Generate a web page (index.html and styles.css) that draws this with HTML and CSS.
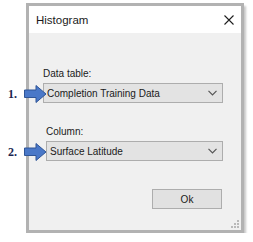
FILE: index.html
```html
<!DOCTYPE html>
<html lang="en">
<head>
    <meta charset="UTF-8">
    <title>Histogram</title>
    <link rel="stylesheet" href="styles.css">
</head>
<body>

    <div class="dialog">
        <div class="titlebar">
            <span class="title">Histogram</span>
            <svg class="close" width="10" height="10" viewBox="0 0 10 10">
                <path d="M0.5 0.5 L9.5 9.5 M9.5 0.5 L0.5 9.5" stroke="#1e1e1e" stroke-width="1.1" fill="none"/>
            </svg>
        </div>

        <div class="content">
            <label class="field-label">Data table:</label>
            <div class="dropdown">
                <span>Completion Training Data</span>
                <svg width="9" height="6" viewBox="0 0 9 6"><path d="M0.5 0.8 L4.5 4.8 L8.5 0.8" stroke="#555" stroke-width="1.2" fill="none"/></svg>
            </div>

            <label class="field-label indent">Column:</label>
            <div class="dropdown indent">
                <span>Surface Latitude</span>
                <svg width="9" height="6" viewBox="0 0 9 6"><path d="M0.5 0.8 L4.5 4.8 L8.5 0.8" stroke="#555" stroke-width="1.2" fill="none"/></svg>
            </div>

            <div class="actions">
                <button class="btn">Ok</button>
            </div>
        </div>

        <!-- size grip -->
        <svg class="grip" width="8" height="8" viewBox="0 0 8 8">
            <rect x="6" y="0" width="2" height="2"/>
            <rect x="3" y="3" width="2" height="2"/>
            <rect x="6" y="3" width="2" height="2"/>
            <rect x="0" y="6" width="2" height="2"/>
            <rect x="3" y="6" width="2" height="2"/>
            <rect x="6" y="6" width="2" height="2"/>
        </svg>
    </div>

    <!-- callout arrows -->
    <div class="marker marker-1">
        <span class="num">1.</span>
        <svg width="23" height="18" viewBox="0 0 23 18"><path d="M0.5 5 H12 V0.5 L22 9 L12 17.5 V12.5 H0.5 Z" fill="#4a78c8" stroke="#2f5597" stroke-width="1"/></svg>
    </div>
    <div class="marker marker-2">
        <span class="num">2.</span>
        <svg width="23" height="18" viewBox="0 0 23 18"><path d="M0.5 5 H12 V0.5 L22 9 L12 17.5 V12.5 H0.5 Z" fill="#4a78c8" stroke="#2f5597" stroke-width="1"/></svg>
    </div>

</body>
</html>
```

FILE: styles.css
```css
body {
    margin: 0;
    background-color: #fff;
    font-family: "Liberation Sans", Arial, sans-serif;
    color: #1a1a1a;
}
.dialog {
    position: relative;
    margin: 3px 0 0 26px;
    width: 212px;
    border: 3px solid #b2b2b2;
    background-color: #f0f0f0;
    box-shadow: 2px 3px 2px rgba(0, 0, 0, 0.22);
}
.titlebar {
    height: 27px;
    padding: 0 7px;
    background-color: #fff;
    display: flex;
    align-items: center;
    justify-content: space-between;
}
.title {
    font-size: 11.5px;
}
.content {
    display: flex;
    flex-direction: column;
    padding: 35px 18px 21px 14px;
}
.field-label {
    font-size: 10px;
    line-height: 12px;
}
.dropdown {
    margin-top: 3px;
    height: 20px;
    box-sizing: border-box;
    border: 1px solid #adadad;
    background-color: #e3e3e3;
    padding: 0 5px 0 3px;
    display: flex;
    align-items: center;
    justify-content: space-between;
    font-size: 10px;
}
.dropdown + .field-label {
    margin-top: 23px;
}
.indent {
    margin-left: 3px;
}
.actions {
    margin-top: 28px;
    display: flex;
    justify-content: flex-end;
    padding-right: 1px;
}
.btn {
    width: 70px;
    height: 20px;
    border: 1px solid #adadad;
    background-color: #e1e1e1;
    font-family: "Liberation Sans", Arial, sans-serif;
    font-size: 10px;
    color: #1a1a1a;
    padding: 0;
}
.grip {
    position: absolute;
    right: 2px;
    bottom: 2px;
    fill: #b9b9b9;
}
.marker {
    position: absolute;
    left: 8px;
    display: flex;
    align-items: center;
}
.marker-1 {
    top: 85px;
}
.marker-2 {
    top: 143px;
}
.num {
    width: 16px;
    font-family: "Liberation Serif", serif;
    font-weight: bold;
    font-size: 12px;
    color: #1b2550;
}
```
